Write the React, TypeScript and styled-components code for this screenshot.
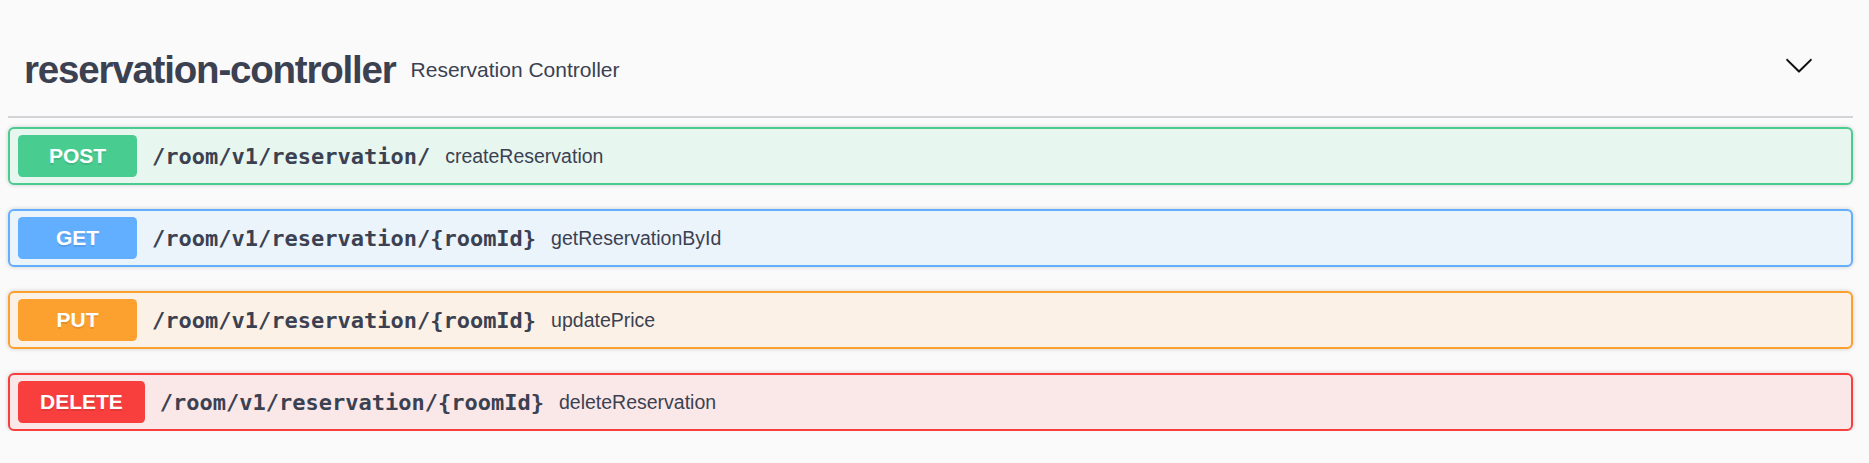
import React from "react";
import styled, { createGlobalStyle } from "styled-components";

const GlobalStyle = createGlobalStyle`
  html, body {
    margin: 0;
    padding: 0;
    background: #fafafa;
  }
  body {
    font-family: "Liberation Sans", Arial, sans-serif;
    color: #3b4151;
  }
`;

type Method = "post" | "get" | "put" | "delete";

const palette: Record<Method, { main: string; bg: string }> = {
  post: { main: "#49cc90", bg: "#e8f6f0" },
  get: { main: "#61affe", bg: "#ebf3fb" },
  put: { main: "#fca130", bg: "#fbf1e6" },
  delete: { main: "#f93e3e", bg: "#fae7e7" },
};

const Page = styled.div`
  padding: 0 16px 0 8px;
`;

const TagHeader = styled.div`
  box-sizing: border-box;
  height: 118px;
  display: flex;
  align-items: center;
  padding: 23px 39px 0 16px;
  border-bottom: 2px solid #d3d4d7;
`;

const TagTitle = styled.h3`
  margin: 0;
  font-family: "Liberation Sans", Arial, sans-serif;
  font-size: 38.5px;
  font-weight: 700;
  letter-spacing: -1.2px;
  color: #3b4151;
`;

const TagDescription = styled.small`
  padding-left: 15px;
  font-size: 21px;
  font-weight: 400;
  color: #3b4151;
  flex: 1;
`;

const Chevron = styled.svg`
  width: 30px;
  height: 30px;
  margin-bottom: 9px;
  fill: #111;
`;

const OpList = styled.div`
  display: flex;
  flex-direction: column;
  gap: 24px;
  margin-top: 9px;
`;

const OpBlock = styled.div<{ $method: Method }>`
  box-sizing: border-box;
  height: 58px;
  display: flex;
  align-items: center;
  padding: 0 8px;
  border: 2px solid ${(p) => palette[p.$method].main};
  border-radius: 6px;
  background: ${(p) => palette[p.$method].bg};
  box-shadow: 0 0 4.5px rgba(0, 0, 0, 0.19);
`;

const MethodBadge = styled.span<{ $method: Method }>`
  box-sizing: border-box;
  min-width: 119px;
  height: 42px;
  padding: 0 22px;
  display: flex;
  align-items: center;
  justify-content: center;
  border-radius: 4.5px;
  background: ${(p) => palette[p.$method].main};
  color: #fff;
  font-family: "Liberation Sans", Arial, sans-serif;
  font-size: 21px;
  font-weight: 700;
  text-shadow: 0 1.5px 0 rgba(0, 0, 0, 0.1);
`;

const PathText = styled.span`
  padding: 0 15px;
  font-family: "DejaVu Sans Mono", "Liberation Mono", monospace;
  font-size: 22px;
  font-weight: 700;
  color: #3b4151;
  white-space: nowrap;
`;

const Summary = styled.span`
  font-family: "Liberation Sans", Arial, sans-serif;
  font-size: 19.5px;
  color: #3b4151;
`;

const ops: { method: Method; path: string; summary: string }[] = [
  { method: "post", path: "/room/v1/reservation/", summary: "createReservation" },
  { method: "get", path: "/room/v1/reservation/{roomId}", summary: "getReservationById" },
  { method: "put", path: "/room/v1/reservation/{roomId}", summary: "updatePrice" },
  { method: "delete", path: "/room/v1/reservation/{roomId}", summary: "deleteReservation" },
];

export default function App() {
  return (
    <Page>
      <GlobalStyle />
      <TagHeader>
        <TagTitle>reservation-controller</TagTitle>
        <TagDescription>Reservation Controller</TagDescription>
        <Chevron viewBox="0 0 20 20" aria-hidden="true">
          <path d="M17.418 6.109c.272-.268.709-.268.979 0s.271.701 0 .969l-7.908 7.83c-.27.268-.707.268-.979 0l-7.908-7.83c-.27-.268-.27-.701 0-.969.271-.268.709-.268.979 0L10 13.25l7.418-7.141z" />
        </Chevron>
      </TagHeader>
      <OpList>
        {ops.map((op) => (
          <OpBlock key={op.method} $method={op.method}>
            <MethodBadge $method={op.method}>{op.method.toUpperCase()}</MethodBadge>
            <PathText>{op.path}</PathText>
            <Summary>{op.summary}</Summary>
          </OpBlock>
        ))}
      </OpList>
    </Page>
  );
}
